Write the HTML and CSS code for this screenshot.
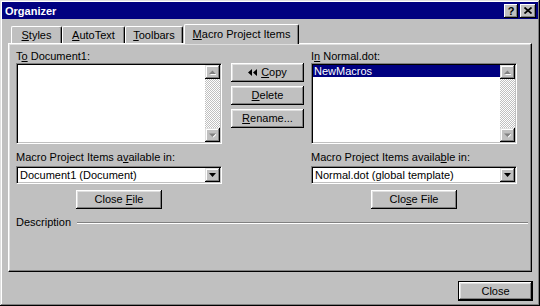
FILE: index.html
```html
<!DOCTYPE html>
<html lang="en">
<head>
    <meta charset="UTF-8">
    <meta name="viewport" content="width=device-width, initial-scale=1.0">
    <title>Organizer</title>
    <link rel="stylesheet" href="styles.css">
</head>
<body>
    <div class="window">
        <div class="titlebar">
            <span class="title">Organizer</span>
            <div class="caption-buttons">
                <span class="cap-btn cap-help">?</span>
                <span class="cap-btn cap-close">
                    <svg width="8" height="7" viewBox="0 0 8 7"><path d="M0.5 0.5 L7.5 6.5 M7.5 0.5 L0.5 6.5" stroke="#000" stroke-width="1.7"/></svg>
                </span>
            </div>
        </div>

        <div class="tabs">
            <div class="tab tab-styles"><u>S</u>tyles</div>
            <div class="tab tab-autotext"><u>A</u>utoText</div>
            <div class="tab tab-toolbars"><u>T</u>oolbars</div>
            <div class="tab tab-active"><u>M</u>acro Project Items</div>
        </div>

        <div class="panel">
            <div class="columns">
                <div class="side">
                    <div class="label">T<u>o</u> Document1:</div>
                    <div class="listbox">
                        <div class="list-items"></div>
                        <div class="scrollbar">
                            <span class="scroll-btn">
                                <svg width="7" height="5" viewBox="0 0 7 5"><path d="M4 1 L7.5 4.5 L0.5 4.5 Z" fill="#fff" transform="translate(0.5 0.5)"/><path d="M3.5 0.5 L7 4 L0 4 Z" fill="#808080"/></svg>
                            </span>
                            <span class="scroll-track"></span>
                            <span class="scroll-btn">
                                <svg width="7" height="5" viewBox="0 0 7 5"><path d="M0.5 0.5 L7.5 0.5 L4 4 Z" fill="#fff" transform="translate(0.5 0.5)"/><path d="M0 0.5 L7 0.5 L3.5 4 Z" fill="#808080"/></svg>
                            </span>
                        </div>
                    </div>
                    <div class="label label-combo">Macro Project Items a<u>v</u>ailable in:</div>
                    <div class="combo">
                        <span class="combo-text">Document1 (Document)</span>
                        <span class="combo-btn">
                            <svg width="7" height="4" viewBox="0 0 7 4"><path d="M0 0 L7 0 L3.5 4 Z" fill="#000"/></svg>
                        </span>
                    </div>
                    <button class="btn btn-closefile"><span>Close <u>F</u>ile</span></button>
                </div>

                <div class="actions">
                    <button class="btn">
                        <svg class="copy-arrows" width="9" height="7" viewBox="0 0 9 7"><path d="M0 3.5 L4 0 L4 7 Z M5 3.5 L9 0 L9 7 Z" fill="#000"/></svg>
                        <span><u>C</u>opy</span>
                    </button>
                    <button class="btn"><span><u>D</u>elete</span></button>
                    <button class="btn"><span><u>R</u>ename...</span></button>
                </div>

                <div class="side">
                    <div class="label">I<u>n</u> Normal.dot:</div>
                    <div class="listbox">
                        <div class="list-items">
                            <div class="list-item selected">NewMacros</div>
                        </div>
                        <div class="scrollbar">
                            <span class="scroll-btn">
                                <svg width="7" height="5" viewBox="0 0 7 5"><path d="M4 1 L7.5 4.5 L0.5 4.5 Z" fill="#fff" transform="translate(0.5 0.5)"/><path d="M3.5 0.5 L7 4 L0 4 Z" fill="#808080"/></svg>
                            </span>
                            <span class="scroll-track"></span>
                            <span class="scroll-btn">
                                <svg width="7" height="5" viewBox="0 0 7 5"><path d="M0.5 0.5 L7.5 0.5 L4 4 Z" fill="#fff" transform="translate(0.5 0.5)"/><path d="M0 0.5 L7 0.5 L3.5 4 Z" fill="#808080"/></svg>
                            </span>
                        </div>
                    </div>
                    <div class="label label-combo">Macro Project Items availa<u>b</u>le in:</div>
                    <div class="combo">
                        <span class="combo-text">Normal.dot (global template)</span>
                        <span class="combo-btn">
                            <svg width="7" height="4" viewBox="0 0 7 4"><path d="M0 0 L7 0 L3.5 4 Z" fill="#000"/></svg>
                        </span>
                    </div>
                    <button class="btn btn-closefile"><span>Clo<u>s</u>e File</span></button>
                </div>
            </div>

            <div class="description">
                <span>Description</span>
                <span class="groove"></span>
            </div>
        </div>

        <div class="footer">
            <button class="btn btn-default"><span>Close</span></button>
        </div>
    </div>
</body>
</html>
```

FILE: styles.css
```css
body {
    margin: 0;
    font-family: "Liberation Sans", Arial, sans-serif;
    font-size: 11px;
    color: #000;
    background-color: #c0c0c0;
}
.window {
    width: 540px;
    height: 306px;
    box-sizing: border-box;
    padding: 2px;
    background-color: #c0c0c0;
    box-shadow: inset -1px -1px #000, inset 1px 1px #dfdfdf, inset -2px -2px #808080, inset 2px 2px #fff;
    display: flex;
    flex-direction: column;
}
.titlebar {
    height: 17px;
    background-color: #000080;
    display: flex;
    align-items: center;
    justify-content: space-between;
    padding: 0 2px 0 3px;
}
.title {
    color: #fff;
    font-weight: bold;
    font-size: 11px;
}
.caption-buttons {
    display: flex;
    gap: 2px;
}
.cap-btn {
    width: 16px;
    height: 14px;
    box-sizing: border-box;
    background-color: #c0c0c0;
    box-shadow: inset -1px -1px #000, inset 1px 1px #fff, inset -2px -2px #808080;
    display: flex;
    align-items: center;
    justify-content: center;
    font-weight: bold;
    font-size: 11px;
    line-height: 14px;
}
.cap-help {
    width: 14px;
}

/* tabs */
.tabs {
    display: flex;
    align-items: flex-end;
    height: 19px;
    margin: 5px 8px 0 6px;
    padding-left: 3px;
}
.tab {
    height: 17px;
    box-sizing: border-box;
    padding-top: 2px;
    line-height: 13px;
    text-align: center;
    background-color: #c0c0c0;
    border-top: 1px solid #fff;
    border-left: 1px solid #fff;
    border-right: 1px solid #000;
    border-radius: 2px 2px 0 0;
    box-shadow: inset -1px 0 #808080;
}
.tab-styles { width: 51px; }
.tab-autotext { width: 63px; }
.tab-toolbars { width: 58px; }
.tab-active {
    width: 115px;
    height: 20px;
    padding-top: 3px;
    margin-left: 1px;
    margin-bottom: -1px;
    position: relative;
    z-index: 1;
}

/* panel */
.panel {
    height: 229px;
    box-sizing: border-box;
    margin: 0 6px 0 6px;
    padding: 6px 10px 0 7px;
    border-top: 1px solid #fff;
    border-left: 1px solid #fff;
    border-right: 1px solid #000;
    border-bottom: 1px solid #000;
    box-shadow: inset -1px -1px #808080, inset 1px 1px #dfdfdf;
}
.columns {
    display: flex;
    gap: 9px;
}
.side {
    width: 206px;
    display: flex;
    flex-direction: column;
}
.side:last-child {
    margin-left: -2px;
}
.label {
    line-height: 13px;
    height: 13px;
    white-space: nowrap;
}
.label-combo {
    margin-top: 7px;
}

.listbox {
    height: 81px;
    box-sizing: border-box;
    background-color: #fff;
    border: 1px solid;
    border-color: #808080 #fff #fff #808080;
    box-shadow: inset 1px 1px #000, inset -1px -1px #c0c0c0;
    padding: 1px;
    display: flex;
}
.list-items {
    flex: 1;
}
.list-item {
    height: 12px;
    line-height: 12px;
    padding-left: 1px;
    white-space: nowrap;
}
.list-item.selected {
    background-color: #000080;
    color: #fff;
}
.scrollbar {
    width: 15px;
    display: flex;
    flex-direction: column;
}
.scroll-btn {
    height: 14px;
    box-sizing: border-box;
    background-color: #c0c0c0;
    box-shadow: inset -1px -1px #000, inset 1px 1px #dfdfdf, inset -2px -2px #808080, inset 2px 2px #fff;
    display: flex;
    align-items: center;
    justify-content: center;
}
.scroll-track {
    flex: 1;
    background: repeating-conic-gradient(#fff 0 25%, #c0c0c0 0 50%) 0 0 / 2px 2px;
}

.combo {
    margin-top: 2px;
    height: 18px;
    box-sizing: border-box;
    background-color: #fff;
    border: 1px solid;
    border-color: #808080 #fff #fff #808080;
    box-shadow: inset 1px 1px #000, inset -1px -1px #c0c0c0;
    padding: 1px;
    display: flex;
}
.combo-text {
    flex: 1;
    padding-left: 2px;
    line-height: 14px;
    white-space: nowrap;
}
.combo-btn {
    width: 15px;
    box-sizing: border-box;
    background-color: #c0c0c0;
    box-shadow: inset -1px -1px #000, inset 1px 1px #dfdfdf, inset -2px -2px #808080, inset 2px 2px #fff;
    display: flex;
    align-items: center;
    justify-content: center;
}

.btn {
    font-family: inherit;
    font-size: 11px;
    color: #000;
    height: 19px;
    padding: 0;
    margin: 0;
    border: none;
    background-color: #c0c0c0;
    box-shadow: inset -1px -1px #000, inset 1px 1px #fff, inset -2px -2px #808080, inset 2px 2px #dfdfdf;
    display: flex;
    align-items: center;
    justify-content: center;
    line-height: 13px;
    white-space: pre;
}
.btn-closefile {
    width: 86px;
    margin: 6px auto 0;
}
.actions {
    width: 73px;
    margin-top: 13px;
    display: flex;
    flex-direction: column;
    gap: 4px;
}
.copy-arrows {
    margin-right: 4px;
}

.description {
    display: flex;
    align-items: center;
    margin-top: 7px;
    margin-right: -7px;
    line-height: 13px;
}
.groove {
    flex: 1;
    margin-left: 6px;
    border-top: 1px solid #808080;
    border-bottom: 1px solid #fff;
}

.footer {
    display: flex;
    justify-content: flex-end;
    margin-top: 9px;
    padding-right: 5px;
}
.btn-default {
    width: 75px;
    height: 20px;
    box-shadow: inset 0 0 0 1px #000, inset -2px -2px #000, inset 2px 2px #fff, inset -3px -3px #808080, inset 3px 3px #dfdfdf;
}
```
